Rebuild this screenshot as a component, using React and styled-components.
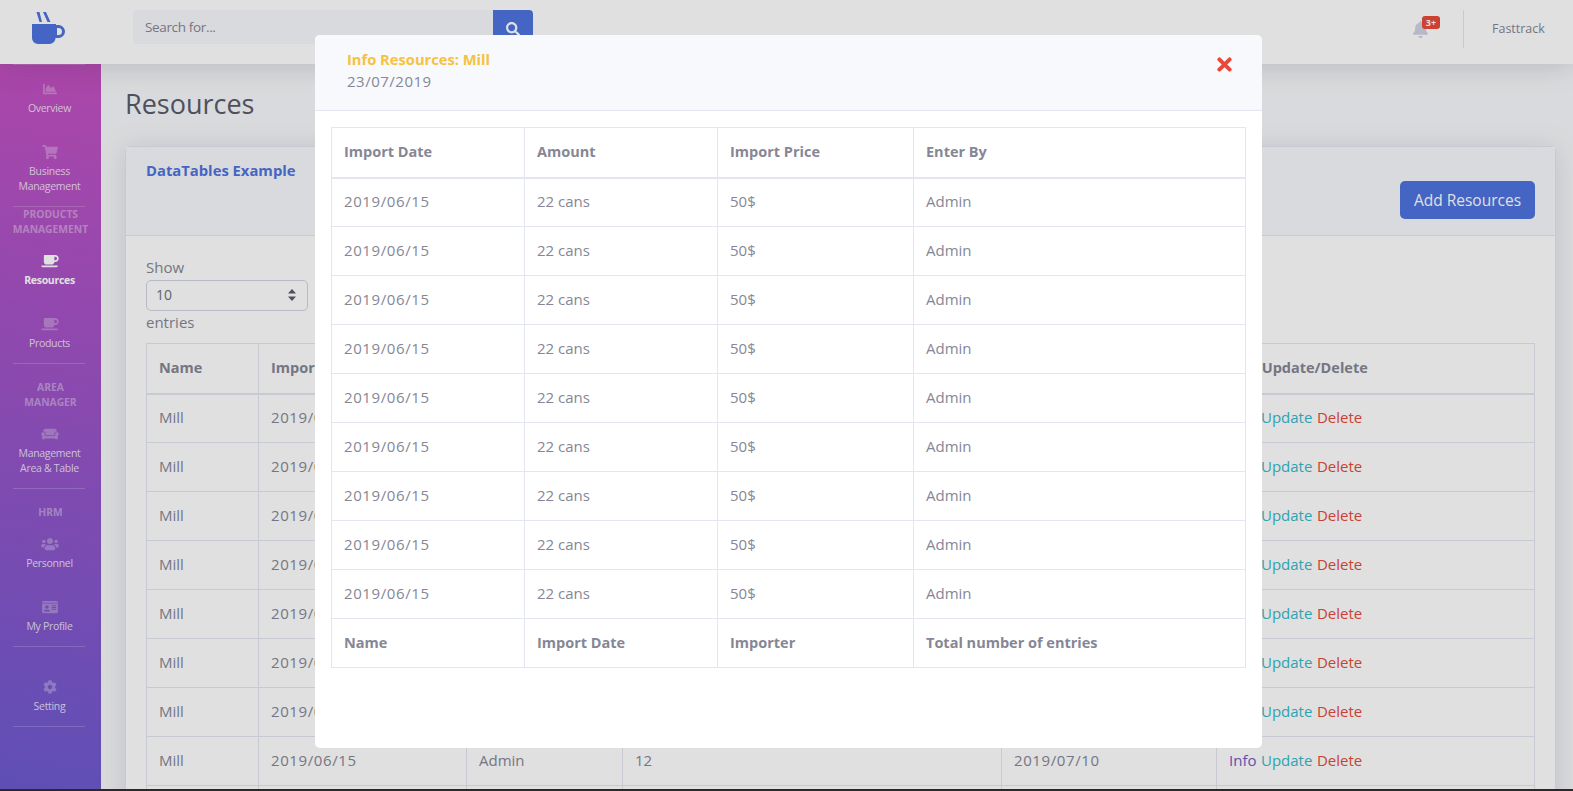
import styled, { createGlobalStyle } from 'styled-components';
import { FaChartArea, FaShoppingCart, FaCoffee, FaCouch, FaUsers, FaIdCard, FaCog, FaBell, FaSearch, FaTimes } from 'react-icons/fa';

const GlobalStyle = createGlobalStyle`
    html, body {
        margin: 0;
        padding: 0;
        height: 100%;
        overflow: hidden;
        background: #2f2f2f;
    }
    body {
        font-family: 'Open Sans', 'Noto Sans', sans-serif;
        font-size: 16px;
        color: #858796;
    }
    * {
        box-sizing: border-box;
    }
`;

const StPage = styled.div`
    height: 789px;
    overflow: hidden;
    display: flex;
    flex-direction: column;
    background: #f8f9fc;
`;

const StTopbar = styled.header`
    height: 64px;
    flex: none;
    display: flex;
    align-items: center;
    background: #fff;
    box-shadow: 0 2px 28px rgba(58, 59, 69, 0.2);
    position: relative;
    z-index: 2;
`;

const StLogo = styled.div`
    width: 133px;
    padding: 0 0 8px 32px;
    display: flex;
`;

const StSearch = styled.div`
    display: flex;
    width: 400px;
    height: 34px;
    margin-top: -10px;
`;

const StSearchInput = styled.div`
    flex: 1;
    background: #f8f9fc;
    border-radius: 4px 0 0 4px;
    padding-left: 12px;
    font-size: 13.5px;
    line-height: 34px;
    letter-spacing: -0.35px;
`;

const StSearchButton = styled.div`
    width: 40px;
    padding-top: 3px;
    background: #4e73df;
    color: #fff;
    border-radius: 0 4px 4px 0;
    display: flex;
    align-items: center;
    justify-content: center;
    font-size: 14px;
`;

const StTopRight = styled.div`
    margin-left: auto;
    display: flex;
    align-items: center;
`;

const StBell = styled.div`
    position: relative;
    color: #d1d3e2;
    font-size: 17px;
    display: flex;
    margin-right: 34px;
    margin-top: -6px;
`;

const StBadge = styled.span`
    position: absolute;
    top: -5px;
    left: 10px;
    width: 18px;
    height: 13px;
    border-radius: 3px;
    background: #e74a3b;
    color: #fff;
    font-size: 9px;
    font-weight: 700;
    line-height: 13px;
    text-align: center;
`;

const StTopDivider = styled.div`
    width: 1px;
    height: 38px;
    background: #e3e6f0;
    margin-top: -7px;
`;

const StUser = styled.span`
    font-size: 12.5px;
    width: 109px;
    padding-left: 28px;
    margin-top: -7px;
`;

const StBody = styled.div`
    flex: 1;
    display: flex;
    min-height: 0;
`;

const StSidebar = styled.nav`
    width: 101px;
    flex: none;
    display: flex;
    flex-direction: column;
    background: linear-gradient(190deg, #c550c2 0%, #6c5acf 100%);
`;

const StDivider = styled.div`
    height: 1px;
    margin: ${(p) => (p.$first ? '0' : '-2px')} 16px 0 13px;
    flex: none;
    background: rgba(255, 255, 255, 0.2);
`;

const StHeading = styled.div`
    font-size: 10.3px;
    font-weight: 700;
    line-height: 15px;
    text-align: center;
    text-transform: uppercase;
    color: rgba(255, 255, 255, 0.4);
    padding-top: ${(p) => p.$top || 0}px;
    margin-bottom: 2px;
`;

const StNavItem = styled.a`
    display: flex;
    flex-direction: column;
    align-items: center;
    gap: 3.5px;
    padding: ${(p) => p.$top || 14}px 2px 14.5px 0;
    flex: none;
    color: rgba(255, 255, 255, ${(p) => (p.$active ? 1 : 0.8)});
    font-size: 10.5px;
    line-height: 15px;
    font-weight: ${(p) => (p.$active ? 700 : 400)};
    text-align: center;
    letter-spacing: -0.3px;

    svg {
        width: 18px;
        height: 14px;
        margin: 1px 0;
        color: ${(p) => (p.$active ? '#fff' : 'rgba(255, 255, 255, 0.3)')};
    }
`;

const StMain = styled.main`
    flex: 1;
    min-width: 0;
    padding: 20px 17px 0 24px;
`;

const StPageTitle = styled.h1`
    margin: 0 0 22px;
    font-size: 27px;
    font-weight: 400;
    line-height: 40px;
    color: #5a5c69;
`;

const StCard = styled.section`
    background: #fff;
    border: 1px solid #e3e6f0;
    border-radius: 5px;
    box-shadow: 0 2px 28px rgba(58, 59, 69, 0.15);
`;

const StCardHeader = styled.div`
    height: 89px;
    background: #f8f9fc;
    border-bottom: 1px solid #e3e6f0;
    padding: 11px 20px;
    display: flex;
    justify-content: space-between;
`;

const StCardTitle = styled.span`
    font-size: 14.8px;
    line-height: 24px;
    font-weight: 700;
    color: #4e73df;
`;

const StAddButton = styled.button`
    height: 38px;
    width: 135px;
    margin-top: 23px;
    padding: 0;
    border: none;
    border-radius: 5px;
    background: #4e73df;
    color: #fff;
    font-family: inherit;
    font-size: 15.5px;
`;

const StCardBody = styled.div`
    padding: 20px;
`;

const StLengthLabel = styled.div`
    height: 24px;
    line-height: 22px;
    font-size: 15px;
`;

const StSelect = styled.div`
    width: 162px;
    height: 31px;
    border: 1px solid #d1d3e2;
    border-radius: 5px;
    padding: 0 11px 2px 9px;
    display: flex;
    align-items: center;
    justify-content: space-between;
    font-size: 14px;
    color: #6e707e;
`;

const StTable = styled.table`
    width: ${(p) => p.$width}px;
    table-layout: fixed;
    border-collapse: collapse;
    font-size: 15px;
    line-height: 24px;
    color: #858796;
`;

const StCell = styled.td`
    height: 49px;
    padding: 0 12px ${(p) => (p.$strong ? 0 : 2)}px;
    border: 1px solid #e3e6f0;
    white-space: nowrap;
    overflow: hidden;
    font-size: ${(p) => (p.$strong ? '14.5px' : '15px')};
    font-weight: ${(p) => (p.$strong ? 700 : 400)};
    letter-spacing: ${(p) => (p.$date ? '0.6px' : '0')};
`;

const StHeadCell = styled.th`
    height: 50px;
    padding: 0 12px;
    text-align: left;
    font-size: 14.5px;
    font-weight: 700;
    border: 1px solid #e3e6f0;
    border-bottom-width: 2px;
    white-space: nowrap;
`;

const StBackTable = styled.div`
    margin-top: 8px;
`;

const StAction = styled.a`
    color: ${(p) => p.$color};
    margin-right: 4.5px;
`;

const StOverlay = styled.div`
    position: fixed;
    inset: 0;
    z-index: 10;
    background: rgba(0, 0, 0, 0.12);
    display: flex;
    justify-content: center;
    align-items: flex-start;
    padding: 35px 0 0 4px;
`;

const StModal = styled.div`
    width: 947px;
    height: 713px;
    background: #fff;
    border-radius: 5px;
    overflow: hidden;
`;

const StModalHeader = styled.div`
    height: 76px;
    padding: 12px 24px 0 32px;
    background: #f8f9fc;
    border-bottom: 1px solid #e3e6f0;
    display: flex;
    justify-content: space-between;
`;

const StModalTitle = styled.div`
    font-size: 14.7px;
    font-weight: 700;
    line-height: 24px;
    color: #f6c23e;
`;

const StModalDate = styled.div`
    font-size: 15px;
    line-height: 21px;
    letter-spacing: 0.5px;
`;

const StClose = styled.div`
    color: #e74a3b;
    font-size: 21px;
    margin: 7px 0 0;
    display: flex;
    width: 24px;
`;

const StModalBody = styled.div`
    padding: 16px;
`;

const backCols = [112, 208, 156, 379, 215, 318];
const modalCols = [193, 193, 196, 332];

const logo = (
    <svg width="34" height="32" viewBox="0 0 34 32">
        <path d="M4.5 0 H7.5 L10 10 H7.5 Z M11 0 H14 L18.5 10 H15.5 Z" fill="#4e73df" />
        <path
            d="M0 12 H24 V13 H26.5 A6.5 6.5 0 0 1 26.5 26 H23.5 A6 6 0 0 1 18 32 H6 A6 6 0 0 1 0 26 Z M25 16 V23 H26.5 A3.5 3.5 0 0 0 26.5 16 Z"
            fill="#4e73df"
            fillRule="evenodd"
        />
    </svg>
);

const selectArrows = (
    <svg width="8" height="12" viewBox="0 0 8 12">
        <path d="M4 0 L8 4.5 H0 Z M4 12 L0 7.5 H8 Z" fill="#5a5c69" />
    </svg>
);

const App = () => {
    const backRows = Array.from({ length: 9 });
    const modalRows = Array.from({ length: 9 });

    return (
        <>
            <GlobalStyle />
            <StPage>
                <StTopbar>
                    <StLogo>{logo}</StLogo>
                    <StSearch>
                        <StSearchInput>Search for...</StSearchInput>
                        <StSearchButton>
                            <FaSearch />
                        </StSearchButton>
                    </StSearch>
                    <StTopRight>
                        <StBell>
                            <FaBell />
                            <StBadge>3+</StBadge>
                        </StBell>
                        <StTopDivider />
                        <StUser>Fasttrack</StUser>
                    </StTopRight>
                </StTopbar>

                <StBody>
                    <StSidebar>
                        <StDivider $first />
                        <StNavItem $top={16}>
                            <FaChartArea />
                            Overview
                        </StNavItem>
                        <StNavItem>
                            <FaShoppingCart />
                            <span>
                                Business
                                <br />
                                Management
                            </span>
                        </StNavItem>
                        <StDivider />
                        <StHeading>
                            Products
                            <br />
                            Management
                        </StHeading>
                        <StNavItem $active>
                            <FaCoffee />
                            Resources
                        </StNavItem>
                        <StNavItem>
                            <FaCoffee />
                            Products
                        </StNavItem>
                        <StDivider />
                        <StHeading $top={16}>
                            Area
                            <br />
                            Manager
                        </StHeading>
                        <StNavItem>
                            <FaCouch />
                            <span>
                                Management
                                <br />
                                Area &amp; Table
                            </span>
                        </StNavItem>
                        <StDivider />
                        <StHeading $top={16}>HRM</StHeading>
                        <StNavItem>
                            <FaUsers />
                            Personnel
                        </StNavItem>
                        <StNavItem>
                            <FaIdCard />
                            My Profile
                        </StNavItem>
                        <StDivider />
                        <StNavItem $top={32}>
                            <FaCog />
                            Setting
                        </StNavItem>
                        <StDivider />
                    </StSidebar>

                    <StMain>
                        <StPageTitle>Resources</StPageTitle>
                        <StCard>
                            <StCardHeader>
                                <StCardTitle>DataTables Example</StCardTitle>
                                <StAddButton>Add Resources</StAddButton>
                            </StCardHeader>
                            <StCardBody>
                                <StLengthLabel>Show</StLengthLabel>
                                <StSelect>
                                    10
                                    {selectArrows}
                                </StSelect>
                                <StLengthLabel>entries</StLengthLabel>
                                <StBackTable>
                                    <StTable $width={1388}>
                                        <colgroup>
                                            {backCols.map((width, index) => (
                                                <col key={index} width={width} />
                                            ))}
                                        </colgroup>
                                        <thead>
                                            <tr>
                                                <StHeadCell>Name</StHeadCell>
                                                <StHeadCell>Import Date</StHeadCell>
                                                <StHeadCell>Importer</StHeadCell>
                                                <StHeadCell>Amount</StHeadCell>
                                                <StHeadCell>Expiry Date</StHeadCell>
                                                <StHeadCell>Info Update/Delete</StHeadCell>
                                            </tr>
                                        </thead>
                                        <tbody>
                                            {backRows.map((_, index) => (
                                                <tr key={index}>
                                                    <StCell>Mill</StCell>
                                                    <StCell $date>2019/06/15</StCell>
                                                    <StCell>Admin</StCell>
                                                    <StCell>12</StCell>
                                                    <StCell $date>2019/07/10</StCell>
                                                    <StCell>
                                                        <StAction $color="#6f5bc8">Info</StAction>
                                                        <StAction $color="#36b9cc">Update</StAction>
                                                        <StAction $color="#e74a3b">Delete</StAction>
                                                    </StCell>
                                                </tr>
                                            ))}
                                        </tbody>
                                    </StTable>
                                </StBackTable>
                            </StCardBody>
                        </StCard>
                    </StMain>
                </StBody>
            </StPage>

            <StOverlay>
                <StModal>
                    <StModalHeader>
                        <div>
                            <StModalTitle>Info Resources: Mill</StModalTitle>
                            <StModalDate>23/07/2019</StModalDate>
                        </div>
                        <StClose>
                            <FaTimes />
                        </StClose>
                    </StModalHeader>
                    <StModalBody>
                        <StTable $width={914}>
                            <colgroup>
                                {modalCols.map((width, index) => (
                                    <col key={index} width={width} />
                                ))}
                            </colgroup>
                            <thead>
                                <tr>
                                    <StHeadCell>Import Date</StHeadCell>
                                    <StHeadCell>Amount</StHeadCell>
                                    <StHeadCell>Import Price</StHeadCell>
                                    <StHeadCell>Enter By</StHeadCell>
                                </tr>
                            </thead>
                            <tbody>
                                {modalRows.map((_, index) => (
                                    <tr key={index}>
                                        <StCell $date>2019/06/15</StCell>
                                        <StCell>22 cans</StCell>
                                        <StCell>50$</StCell>
                                        <StCell>Admin</StCell>
                                    </tr>
                                ))}
                                <tr>
                                    <StCell $strong>Name</StCell>
                                    <StCell $strong>Import Date</StCell>
                                    <StCell $strong>Importer</StCell>
                                    <StCell $strong>Total number of entries</StCell>
                                </tr>
                            </tbody>
                        </StTable>
                    </StModalBody>
                </StModal>
            </StOverlay>
        </>
    );
};

export default App;
